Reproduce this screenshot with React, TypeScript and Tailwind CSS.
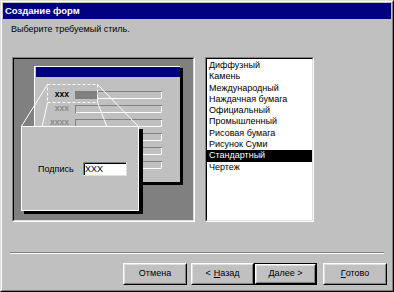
import React from 'react';

const styles = [
  'Диффузный',
  'Камень',
  'Международный',
  'Наждачная бумага',
  'Официальный',
  'Промышленный',
  'Рисовая бумага',
  'Рисунок Суми',
  'Стандартный',
  'Чертеж',
];

const font = { fontFamily: '"Liberation Sans", Arial, sans-serif' };

// Win95 raised button
const WinButton = ({
  children,
  isDefault = false,
  className = '',
}: {
  children: React.ReactNode;
  isDefault?: boolean;
  className?: string;
}) => (
  <div className={`h-[22px] ${isDefault ? 'border border-black' : ''} ${className}`}>
    <div className="h-full border border-t-white border-l-white border-r-black border-b-black">
      <div className="h-full flex items-center justify-center border border-t-[#dfdfdf] border-l-[#dfdfdf] border-r-[#808080] border-b-[#808080] text-[9px] text-black">
        {children}
      </div>
    </div>
  </div>
);

// Preview illustration of a form with a zoomed-in label
const Preview = () => (
  <svg width="179" height="161" viewBox="14 59 179 161" className="block">
    <rect x="14" y="59" width="179" height="161" fill="#808080" />

    {/* mini form with shadow */}
    <rect x="37" y="68" width="146" height="117" fill="#000" />
    <rect x="34" y="66" width="146" height="116" fill="#c0c0c0" />
    <path d="M34.5 182V66.5H180" stroke="#fff" fill="none" />
    <rect x="36" y="67" width="144" height="10" fill="#000080" />

    {[91, 105, 119, 133, 147, 161].map((y) => (
      <g key={y}>
        <rect x="75.5" y={y + 0.5} width="86" height="7" fill="#c0c0c0" stroke="#808080" />
        <path d={`M76 ${y + 7.5}H161.5V${y + 1}`} stroke="#fff" fill="none" />
      </g>
    ))}
    <rect x="75" y="91" width="22" height="8" fill="#808080" />

    <text x="69" y="97" textAnchor="end" fontSize="8.5" fontWeight="bold" fill="#000" style={font}>xxx</text>
    <text x="69" y="111" textAnchor="end" fontSize="8.5" fontWeight="bold" fill="#8a8a8a" style={font}>xxx</text>
    <text x="69" y="125" textAnchor="end" fontSize="8.5" fontWeight="bold" fill="#8a8a8a" style={font}>xxxx</text>

    {/* zoom selection */}
    <rect x="47.5" y="84.5" width="50" height="18" fill="none" stroke="#fff" strokeDasharray="3 2" />
    <path d="M47.5 84.5L21 127M97.5 84.5L139 127M47.5 102.5L42 127M97.5 102.5L107 127" stroke="#fff" fill="none" />

    {/* zoomed popup */}
    <rect x="24" y="129" width="119" height="85" fill="#000" />
    <rect x="21.5" y="126.5" width="117" height="84" fill="#c0c0c0" stroke="#fff" />

    <text x="38" y="172" fontSize="9" fill="#000" style={font}>Подпись</text>
    <rect x="83" y="162" width="44" height="14" fill="#fff" />
    <path d="M83.5 176V162.5H127" stroke="#808080" fill="none" />
    <path d="M84.5 175V163.5H126" stroke="#000" fill="none" />
    <path d="M83 175.5H126.5V162" stroke="#dfdfdf" fill="none" />
    <text x="85" y="172" fontSize="9" fontWeight="300" fill="#000" style={font}>XXX</text>
  </svg>
);

export default function App() {
  return (
    <div className="w-[394px] h-[292px] bg-[#c0c0c0]" style={font}>
      <div className="w-full h-full border border-t-[#dfdfdf] border-l-[#dfdfdf] border-r-black border-b-black">
        <div className="w-full h-full flex flex-col p-px border border-t-white border-l-white border-r-[#808080] border-b-[#808080]">
          {/* Title bar */}
          <div className="h-[16px] bg-[#000080] flex items-center px-[2px]">
            <span className="text-white text-[9.5px] font-bold leading-none">Создание форм</span>
          </div>

          {/* Body */}
          <div className="flex-1 flex flex-col">
            <p className="mt-[4px] ml-[8px] text-[9px] leading-[13px] text-black">Выберите требуемый стиль.</p>

            <div className="mt-[21px] ml-[9px] flex gap-[10px]">
              {/* Preview frame */}
              <div className="border border-t-[#808080] border-l-[#808080] border-r-white border-b-white">
                <div className="border border-t-black border-l-black border-r-[#dfdfdf] border-b-[#dfdfdf]">
                  <Preview />
                </div>
              </div>

              {/* Style list */}
              <div className="w-[109px] h-[165px] border border-t-[#808080] border-l-[#808080] border-r-white border-b-white">
                <div className="h-full bg-white border border-t-black border-l-black border-r-[#dfdfdf] border-b-[#dfdfdf] pt-px">
                  {styles.map((s) => (
                    <div
                      key={s}
                      className={`pl-[2px] text-[9px] leading-[11.3px] whitespace-nowrap ${
                        s === 'Стандартный' ? 'bg-black text-white' : 'text-black'
                      }`}
                    >
                      {s}
                    </div>
                  ))}
                </div>
              </div>
            </div>

            {/* Separator */}
            <div className="mt-[30px] ml-[7px] w-[374px] border-t border-t-[#808080] border-b border-b-white" />

            {/* Buttons */}
            <div className="mt-[9px] ml-[120px] flex">
              <WinButton className="w-[64px]">Отмена</WinButton>
              <WinButton className="w-[63px] ml-[4px]">
                &lt; <span className="underline ml-[3px]">Н</span>азад
              </WinButton>
              <WinButton className="w-[63px]" isDefault>
                <span className="underline">Д</span>алее &gt;
              </WinButton>
              <WinButton className="w-[64px] ml-[6px]">
                <span className="underline">Г</span>отово
              </WinButton>
            </div>
          </div>
        </div>
      </div>
    </div>
  );
}
